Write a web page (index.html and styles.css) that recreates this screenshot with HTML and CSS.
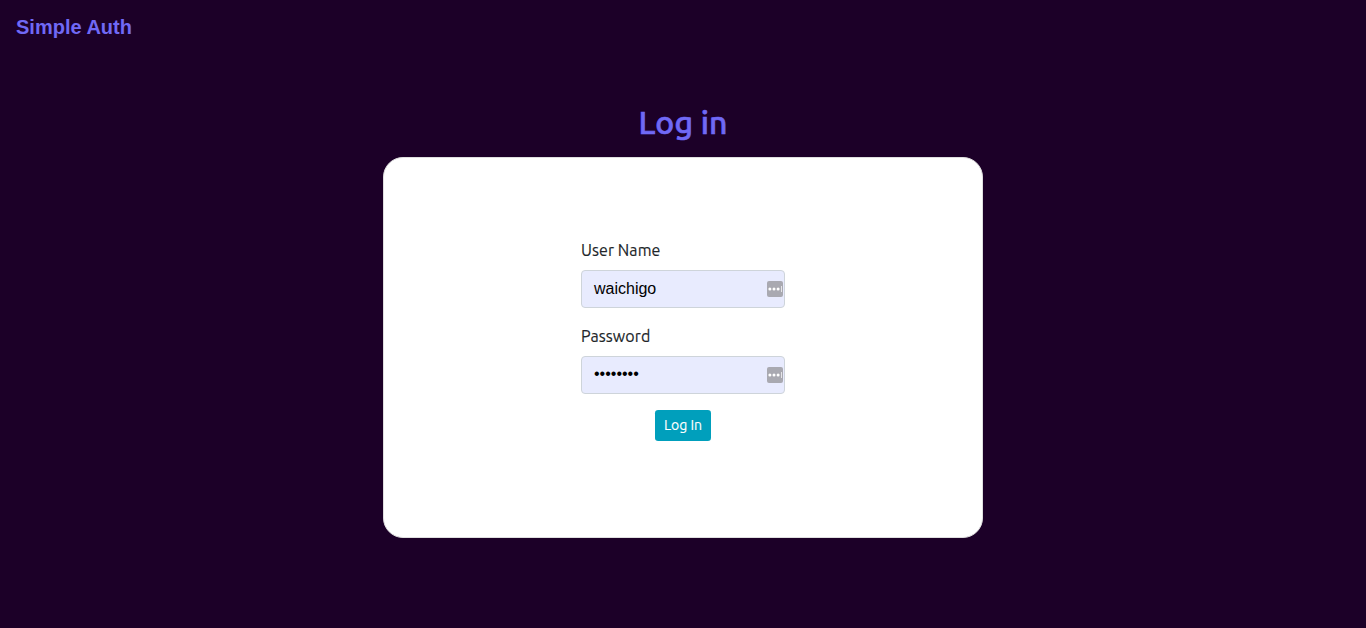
FILE: index.html
```html
<!DOCTYPE html>
<html lang="en">
<head>
<meta charset="utf-8">
<title>Simple Auth</title>
<link rel="stylesheet" href="styles.css">
</head>
<body>
<nav class="navbar"><a class="brand">Simple Auth</a></nav>
<main class="login">
<h2 class="title">Log in</h2>
<section class="card">
<form class="form">
<div class="group">
<label class="label">User Name</label>
<div class="field"><span class="value">waichigo</span>
<svg class="key" viewBox="0 0 16 16"><rect width="16" height="16" rx="2" fill="#a9a9b1"/><g fill="#fff"><circle cx="2.9" cy="8" r="1.5"/><circle cx="7" cy="8" r="1.5"/><circle cx="11.1" cy="8" r="1.5"/><rect x="14" y="5" width="1" height="6" opacity=".7"/></g></svg></div>
</div>
<div class="group">
<label class="label">Password</label>
<div class="field"><span class="value dots">••••••••</span>
<svg class="key" viewBox="0 0 16 16"><rect width="16" height="16" rx="2" fill="#a9a9b1"/><g fill="#fff"><circle cx="2.9" cy="8" r="1.5"/><circle cx="7" cy="8" r="1.5"/><circle cx="11.1" cy="8" r="1.5"/><rect x="14" y="5" width="1" height="6" opacity=".7"/></g></svg></div>
</div>
<button class="submit" type="button">Log In</button>
</form>
</section>
</main>
</body>
</html>
```
FILE: styles.css
```css
* { box-sizing: border-box; }
body { margin: 0; min-height: 628px; background: #1c0028; font: 16px/24px "Ubuntu", "Noto Sans", sans-serif; color: #212529; }
.navbar { height: 54px; padding: 12px 16px; }
.brand { display: block; font: bold 20px/30px "Liberation Sans", Arial, sans-serif; color: #7069f5; }
.login { width: 600px; margin: 0 auto; padding-top: 49px; }
.title { margin: 0; height: 54px; font-size: 32px; font-weight: 500; line-height: 38px; letter-spacing: 0.1px; color: #7069f5; text-align: center; -webkit-text-stroke: 0.65px #7069f5; }
.card { height: 381px; background: #fff; border: 1px solid #dfdfdf; border-radius: 20px; display: flex; justify-content: center; padding-top: 80px; }
.form { width: 204px; display: flex; flex-direction: column; align-items: center; }
.group { width: 204px; margin-bottom: 16px; }
.label { display: block; margin-bottom: 8px; height: 24px; letter-spacing: 0.08px; -webkit-text-stroke: 0.15px #212529; }
.field { height: 38px; border: 1px solid #ced4da; border-radius: 4px; background: #e8ebfe; display: flex; align-items: center; justify-content: space-between; padding: 0 1px 0 12px; }
.value { font: 16px/24px "Liberation Sans", Arial, sans-serif; color: #000; }
.dots { padding-bottom: 2px; }
.key { width: 16px; height: 16px; }
.submit { width: 56px; height: 31px; padding: 0; border: 0; border-radius: 3.2px; background: #009fbc; color: #fff; font: 14px/21px "Ubuntu", "Noto Sans", sans-serif; -webkit-text-stroke: 0.12px #fff; }
```
